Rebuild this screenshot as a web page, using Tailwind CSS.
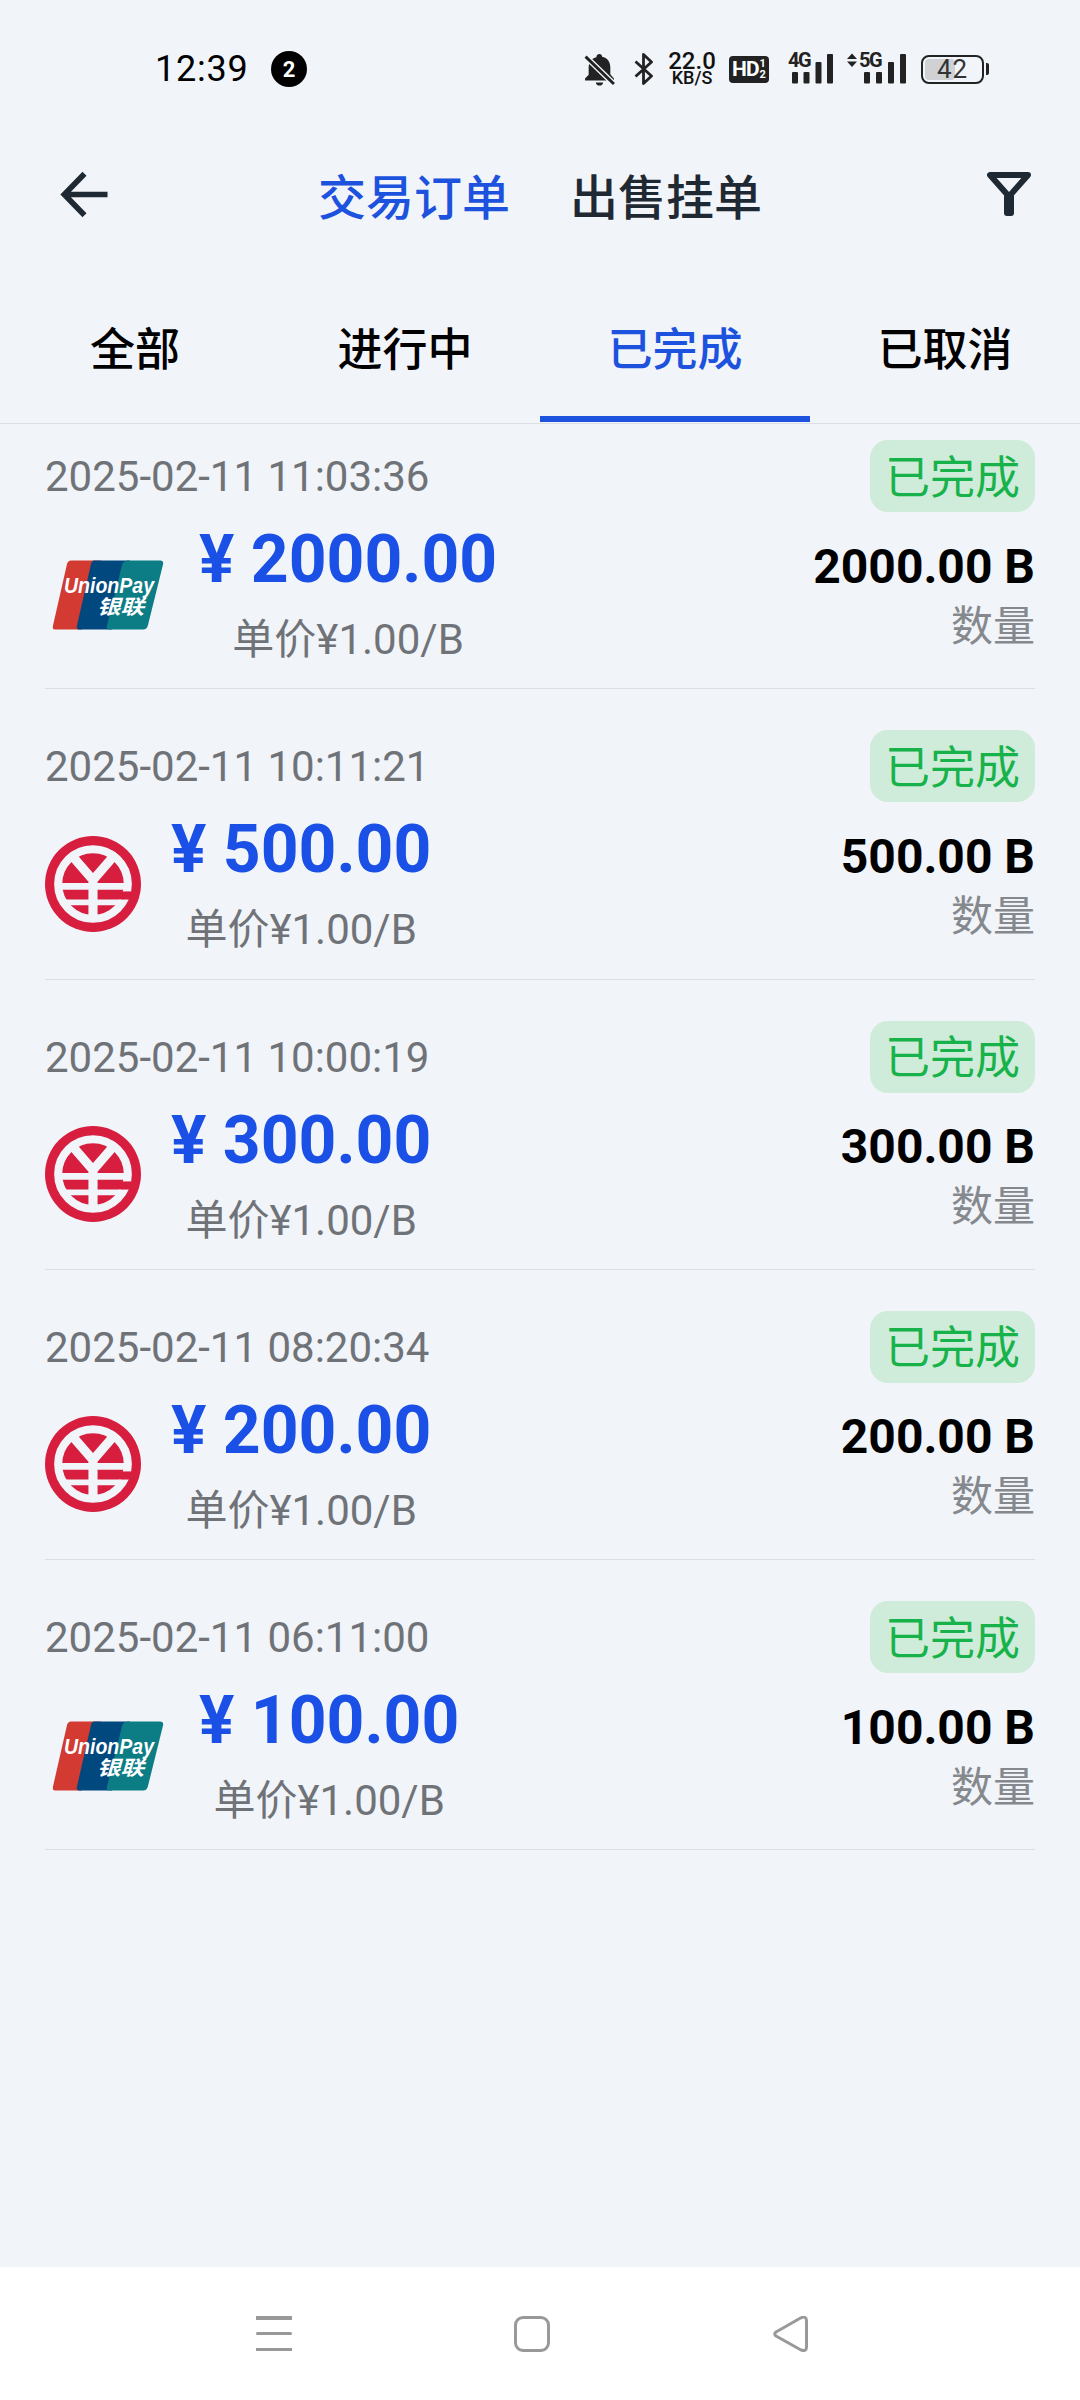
<!DOCTYPE html>
<html lang="zh"><head><meta charset="utf-8">
<script src="https://cdn.jsdelivr.net/npm/@tailwindcss/browser@4"></script>
</head>
<body class="m-0">
<div class="w-[1080px] h-[2400px] bg-[#f1f4f9] flex flex-col overflow-hidden font-['Roboto','Noto_Sans_CJK_SC',sans-serif]">

<!-- status bar -->
<div class="h-[138px] shrink-0 flex items-center text-[#111]">
  <div class="ml-[155px] w-[96px] text-[36px] leading-none tracking-[0.8px] text-black">12:39</div>
  <div class="ml-[20px] w-[36px] h-[36px] rounded-full bg-black text-white text-[22px] font-bold flex items-center justify-center">2</div>
  <svg class="ml-[277px] w-[32px] h-[33px]" viewBox="0 0 31 32"><path d="M15 1c1.500 0 2.500 1 2.500 2.700 5 1 8 5 8 10v7l3.500 4v2H1V24.700l3.500-3.500v-7c0-5 3-9 7.500-10C12 2 13.500 1 15 1zM11.500 28.500h7c0 2-1.500 3-3.500 3s-3.500-1-3.500-3z" fill="#222"/><path d="M1.500 3.500 29 30" stroke="#f1f4f9" stroke-width="5.500"/><path d="M1.500 3.500 29 30" stroke="#222" stroke-width="2.800"/></svg>
  <svg class="ml-[18px] w-[20px] h-[32px]" viewBox="0 0 20 32" fill="none" stroke="#222" stroke-width="2.800" stroke-linejoin="round"><path d="M1.500 8.500 17.500 23 9.500 30.500V1.500L17.500 9 1.500 23.500"/></svg>
  <div class="ml-[13px] w-[50px] h-[34px] flex flex-col items-center font-['Roboto',sans-serif] text-[#111]">
    <span class="text-[24px] leading-[18px] font-medium">22.0</span>
    <span class="text-[18px] leading-[16px] font-medium">KB/S</span>
  </div>
  <div class="ml-[12px] w-[40px] h-[27px] rounded-[4px] bg-[#222] text-white flex items-center justify-center gap-[1px] font-bold">
    <span class="text-[21px] leading-none tracking-[-1px]">HD</span>
    <span class="flex flex-col text-[11px] leading-[11px] font-bold"><span>1</span><span>2</span></span>
  </div>
  <div class="ml-[19px] w-[45px] h-[32px] relative">
    <span class="absolute left-0 top-0 text-[20px] leading-[15px] font-bold tracking-[-1.5px] text-[#222]">4G</span>
    <svg class="absolute left-0 top-0 w-[45px] h-[32px]" viewBox="0 0 45 32" fill="#222"><rect x="4" y="19" width="6" height="11.500" rx="1"/><rect x="15.500" y="19" width="6" height="11.500" rx="1"/><rect x="27.500" y="9" width="6" height="21.500" rx="1"/><rect x="39" y="1" width="6" height="29.500" rx="1"/></svg>
  </div>
  <div class="ml-[14px] w-[59px] h-[32px] relative">
    <svg class="absolute left-0 top-0 w-[59px] h-[32px]" viewBox="0 0 59 32" fill="#222"><path d="M5 0.500 10 6H0zM5 14 10 8.500H0z"/><rect x="17" y="19" width="6" height="11.500" rx="1"/><rect x="29" y="19" width="6" height="11.500" rx="1"/><rect x="41" y="9" width="6" height="21.500" rx="1"/><rect x="53" y="1" width="6" height="29.500" rx="1"/></svg>
    <span class="absolute left-[12px] top-0 text-[20px] leading-[15px] font-bold tracking-[-1.5px] text-[#222]">5G</span>
  </div>
  <div class="ml-[15px] w-[63px] h-[29px] rounded-[8px] border-[2.5px] border-[#222] relative flex items-center justify-center">
    <div class="absolute left-[2px] top-[2px] bottom-[2px] w-[30px] rounded-[4px] bg-[#cfd1d4]"></div>
    <span class="relative text-[26px] leading-none text-[#333] tracking-[1px]">42</span>
  </div>
  <div class="ml-[2px] w-[3px] h-[12px] rounded-r-[2px] bg-[#222]"></div>
</div>

<!-- header -->
<div class="h-[118px] shrink-0 flex items-center relative">
  <svg class="ml-[60px] w-[49px] h-[47px] mb-[6px]" viewBox="0 0 52 50" fill="none" stroke="#1f2933" stroke-width="6"><path d="M50.500 25H6M26 3 4.500 25 26 47"/></svg>
  <div class="ml-[209px] h-[60px] text-[48px] leading-[63px] font-medium text-[#1c52dd]">交易订单</div>
  <div class="ml-[60px] h-[60px] text-[48px] leading-[63px] font-medium text-[#1f2933]">出售挂单</div>
  <svg class="ml-[225px] w-[44px] h-[44px] mb-[6px]" viewBox="0 0 44 44" fill="none"><path d="M3 3h38L22 24.500z" stroke="#1f2933" stroke-width="6" stroke-linejoin="round"/><rect x="17" y="22" width="10" height="22" rx="3" fill="#1f2933"/></svg>
</div>

<!-- tabs -->
<div class="h-[168px] shrink-0 border-b border-[#dcdfe4] flex items-start">
  <div class="w-[270px] h-[166px] pt-[65px] text-center text-[45px] leading-[60px] font-medium text-black">全部</div>
  <div class="w-[270px] h-[166px] pt-[65px] text-center text-[45px] leading-[60px] font-medium text-black">进行中</div>
  <div class="w-[270px] h-[166px] pt-[65px] text-center text-[45px] leading-[60px] font-medium text-[#1c52dd] border-b-[6px] border-[#1c52dd]">已完成</div>
  <div class="w-[270px] h-[166px] pt-[65px] text-center text-[45px] leading-[60px] font-medium text-black">已取消</div>
</div>

<!-- list -->
<div class="flex-1 px-[45px]">

  <!-- row 1 -->
  <div class="pt-[16px] pb-[18.300px] border-b border-[#dcdfe4]">
    <div class="flex justify-between items-center h-[72px]">
      <span class="pt-[2px] text-[42px] leading-none text-[#6f7378]">2025-02-11 11:03:36</span>
      <span class="w-[165px] h-[72px] pt-[4px] rounded-[18px] bg-[#cfebda] text-[#17b34a] text-[45px] leading-none flex items-center justify-center">已完成</span>
    </div>
    <div class="mt-[7px] flex items-center justify-between">
      <div class="flex items-center">
        <svg class="w-[124px] h-[72px] shrink-0" viewBox="-7 0 124 72" role="img" aria-label="UnionPay">
          <path d="M19 1.500h30L30 70.500H3q-3 0-2-4L15 5q1-3.500 4-3.500z" fill="#d33a32"/>
          <path d="M42 1.500h36L60 70.500H27q-3 0-2-4L39 5q1-3.500 3-3.500z" fill="#00487e"/>
          <path d="M77 1.500h31q4 0 3 4L96 66q-1 4.500-5 4.500H57q-3 0-2-4L70 6q1-4.500 7-4.500z" fill="#0d7d85"/>
          <text x="12" y="34" textLength="90" lengthAdjust="spacingAndGlyphs" fill="#fff" font-family="Liberation Sans" font-size="22" font-weight="700" font-style="italic">UnionPay</text>
          <text x="45" y="55" textLength="47" lengthAdjust="spacingAndGlyphs" fill="#fff" font-family="Noto Sans CJK SC" font-size="20" font-weight="700" font-style="italic">银联</text>
        </svg>
        <div class="ml-[30px] flex flex-col items-center">
          <div class="h-[80px] text-[66px] leading-[81px] font-bold text-[#1a50e6] whitespace-pre">¥ 2000.00</div>
          <div class="mt-[11px] h-[60px] text-[42px] leading-[60px] text-[#6f7378]">单价¥1.00/B</div>
        </div>
      </div>
      <div class="text-right">
        <div class="h-[60px] text-[48px] leading-[63px] font-bold text-black">2000.00 B</div>
        <div class="h-[60px] text-[42px] leading-[64px] text-[#85888c]">数量</div>
      </div>
    </div>
  </div>

  <!-- row 2 -->
  <div class="pt-[41px] pb-[18.300px] border-b border-[#dcdfe4]">
    <div class="flex justify-between items-center h-[72px]">
      <span class="pt-[2px] text-[42px] leading-none text-[#6f7378]">2025-02-11 10:11:21</span>
      <span class="w-[165px] h-[72px] pt-[4px] rounded-[18px] bg-[#cfebda] text-[#17b34a] text-[45px] leading-none flex items-center justify-center">已完成</span>
    </div>
    <div class="mt-[7px] flex items-center justify-between">
      <div class="flex items-center">
        <svg class="w-[96px] h-[96px] shrink-0 mb-[2px]" viewBox="48 48 284 284" role="img" aria-label="数字人民币">
          <circle cx="190" cy="190" r="142" fill="#d81e3f"/>
          <circle cx="190" cy="190" r="103" fill="none" stroke="#f1f4f9" stroke-width="24"/>
          <path d="M268 212h50v24h-50z" fill="#d81e3f"/>
          <g stroke="#f1f4f9" fill="none">
            <path d="M122 100 190 178 258 100M190 170V300" stroke-width="27"/>
            <path d="M92 197H300" stroke-width="20"/>
            <path d="M100 244H272" stroke-width="17"/>
          </g>
        </svg>
        <div class="ml-[30px] flex flex-col items-center">
          <div class="h-[80px] text-[66px] leading-[81px] font-bold text-[#1a50e6] whitespace-pre">¥ 500.00</div>
          <div class="mt-[11px] h-[60px] text-[42px] leading-[60px] text-[#6f7378]">单价¥1.00/B</div>
        </div>
      </div>
      <div class="text-right">
        <div class="h-[60px] text-[48px] leading-[63px] font-bold text-black">500.00 B</div>
        <div class="h-[60px] text-[42px] leading-[64px] text-[#85888c]">数量</div>
      </div>
    </div>
  </div>

  <!-- row 3 -->
  <div class="pt-[41px] pb-[18.300px] border-b border-[#dcdfe4]">
    <div class="flex justify-between items-center h-[72px]">
      <span class="pt-[2px] text-[42px] leading-none text-[#6f7378]">2025-02-11 10:00:19</span>
      <span class="w-[165px] h-[72px] pt-[4px] rounded-[18px] bg-[#cfebda] text-[#17b34a] text-[45px] leading-none flex items-center justify-center">已完成</span>
    </div>
    <div class="mt-[7px] flex items-center justify-between">
      <div class="flex items-center">
        <svg class="w-[96px] h-[96px] shrink-0 mb-[2px]" viewBox="48 48 284 284" role="img" aria-label="数字人民币">
          <circle cx="190" cy="190" r="142" fill="#d81e3f"/>
          <circle cx="190" cy="190" r="103" fill="none" stroke="#f1f4f9" stroke-width="24"/>
          <path d="M268 212h50v24h-50z" fill="#d81e3f"/>
          <g stroke="#f1f4f9" fill="none">
            <path d="M122 100 190 178 258 100M190 170V300" stroke-width="27"/>
            <path d="M92 197H300" stroke-width="20"/>
            <path d="M100 244H272" stroke-width="17"/>
          </g>
        </svg>
        <div class="ml-[30px] flex flex-col items-center">
          <div class="h-[80px] text-[66px] leading-[81px] font-bold text-[#1a50e6] whitespace-pre">¥ 300.00</div>
          <div class="mt-[11px] h-[60px] text-[42px] leading-[60px] text-[#6f7378]">单价¥1.00/B</div>
        </div>
      </div>
      <div class="text-right">
        <div class="h-[60px] text-[48px] leading-[63px] font-bold text-black">300.00 B</div>
        <div class="h-[60px] text-[42px] leading-[64px] text-[#85888c]">数量</div>
      </div>
    </div>
  </div>

  <!-- row 4 -->
  <div class="pt-[41px] pb-[18.300px] border-b border-[#dcdfe4]">
    <div class="flex justify-between items-center h-[72px]">
      <span class="pt-[2px] text-[42px] leading-none text-[#6f7378]">2025-02-11 08:20:34</span>
      <span class="w-[165px] h-[72px] pt-[4px] rounded-[18px] bg-[#cfebda] text-[#17b34a] text-[45px] leading-none flex items-center justify-center">已完成</span>
    </div>
    <div class="mt-[7px] flex items-center justify-between">
      <div class="flex items-center">
        <svg class="w-[96px] h-[96px] shrink-0 mb-[2px]" viewBox="48 48 284 284" role="img" aria-label="数字人民币">
          <circle cx="190" cy="190" r="142" fill="#d81e3f"/>
          <circle cx="190" cy="190" r="103" fill="none" stroke="#f1f4f9" stroke-width="24"/>
          <path d="M268 212h50v24h-50z" fill="#d81e3f"/>
          <g stroke="#f1f4f9" fill="none">
            <path d="M122 100 190 178 258 100M190 170V300" stroke-width="27"/>
            <path d="M92 197H300" stroke-width="20"/>
            <path d="M100 244H272" stroke-width="17"/>
          </g>
        </svg>
        <div class="ml-[30px] flex flex-col items-center">
          <div class="h-[80px] text-[66px] leading-[81px] font-bold text-[#1a50e6] whitespace-pre">¥ 200.00</div>
          <div class="mt-[11px] h-[60px] text-[42px] leading-[60px] text-[#6f7378]">单价¥1.00/B</div>
        </div>
      </div>
      <div class="text-right">
        <div class="h-[60px] text-[48px] leading-[63px] font-bold text-black">200.00 B</div>
        <div class="h-[60px] text-[42px] leading-[64px] text-[#85888c]">数量</div>
      </div>
    </div>
  </div>

  <!-- row 5 -->
  <div class="pt-[41px] pb-[18.300px] border-b border-[#dcdfe4]">
    <div class="flex justify-between items-center h-[72px]">
      <span class="pt-[2px] text-[42px] leading-none text-[#6f7378]">2025-02-11 06:11:00</span>
      <span class="w-[165px] h-[72px] pt-[4px] rounded-[18px] bg-[#cfebda] text-[#17b34a] text-[45px] leading-none flex items-center justify-center">已完成</span>
    </div>
    <div class="mt-[7px] flex items-center justify-between">
      <div class="flex items-center">
        <svg class="w-[124px] h-[72px] shrink-0" viewBox="-7 0 124 72" role="img" aria-label="UnionPay">
          <path d="M19 1.500h30L30 70.500H3q-3 0-2-4L15 5q1-3.500 4-3.500z" fill="#d33a32"/>
          <path d="M42 1.500h36L60 70.500H27q-3 0-2-4L39 5q1-3.500 3-3.500z" fill="#00487e"/>
          <path d="M77 1.500h31q4 0 3 4L96 66q-1 4.500-5 4.500H57q-3 0-2-4L70 6q1-4.500 7-4.500z" fill="#0d7d85"/>
          <text x="12" y="34" textLength="90" lengthAdjust="spacingAndGlyphs" fill="#fff" font-family="Liberation Sans" font-size="22" font-weight="700" font-style="italic">UnionPay</text>
          <text x="45" y="55" textLength="47" lengthAdjust="spacingAndGlyphs" fill="#fff" font-family="Noto Sans CJK SC" font-size="20" font-weight="700" font-style="italic">银联</text>
        </svg>
        <div class="ml-[30px] flex flex-col items-center">
          <div class="h-[80px] text-[66px] leading-[81px] font-bold text-[#1a50e6] whitespace-pre">¥ 100.00</div>
          <div class="mt-[11px] h-[60px] text-[42px] leading-[60px] text-[#6f7378]">单价¥1.00/B</div>
        </div>
      </div>
      <div class="text-right">
        <div class="h-[60px] text-[48px] leading-[63px] font-bold text-black">100.00 B</div>
        <div class="h-[60px] text-[42px] leading-[64px] text-[#85888c]">数量</div>
      </div>
    </div>
  </div>
</div>

<!-- nav bar -->
<div class="h-[133px] shrink-0 bg-white flex items-center">
  <div class="ml-[256px] w-[36px] h-[35px] flex flex-col justify-between">
    <div class="h-[3.500px] bg-[#999]"></div><div class="h-[3.500px] bg-[#999] rounded-full"></div><div class="h-[3.500px] bg-[#999]"></div>
  </div>
  <div class="ml-[222px] w-[36px] h-[36px] rounded-[9px] border-[3px] border-[#999]"></div>
  <svg class="ml-[223px] w-[36px] h-[36px]" viewBox="0 0 36 36" fill="none"><path d="M3 16 28 1.800Q33.500 -0.500 33.500 5V31Q33.500 36 28 34L3 20Q0.500 18 3 16z" stroke="#999" stroke-width="3" stroke-linejoin="round"/></svg>
</div>

</div>
</body></html>
